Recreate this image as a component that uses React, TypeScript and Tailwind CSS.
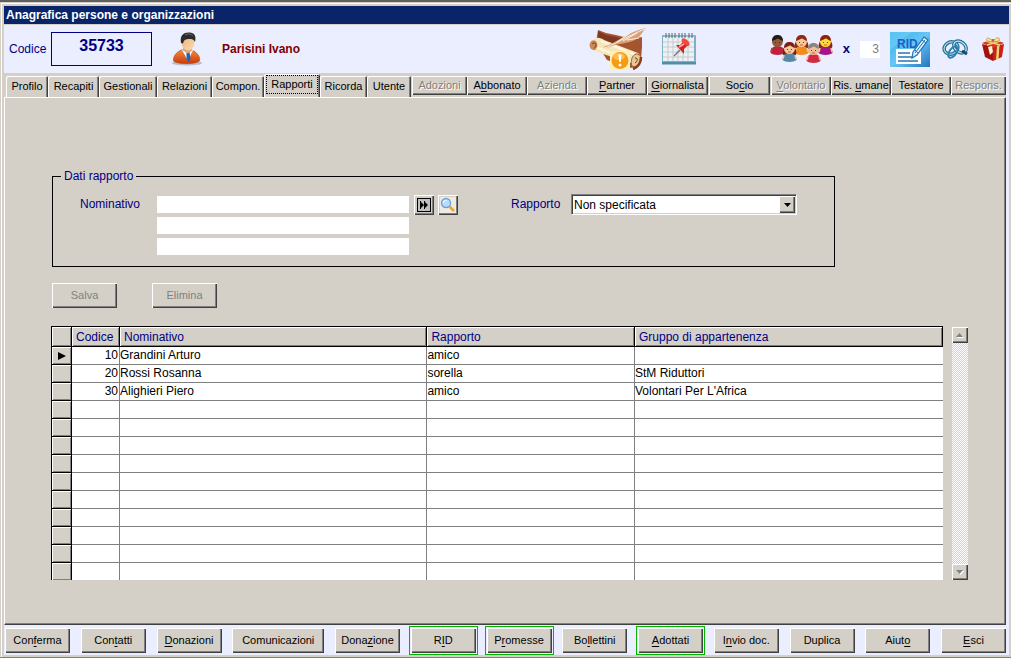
import React from "react";

const raised =
  "bg-[#d4d0c8] shadow-[inset_1px_1px_0_#fff,inset_-1px_-1px_0_#404040,inset_-2px_-2px_0_#808080]";
const disabledText = "text-[#808080] [text-shadow:1px_1px_0_#fff]";

/* Renders a caption with its access key underlined; the key follows a "&". */
function Caption({ text }: { text: string }) {
  const i = text.indexOf("&");
  if (i < 0) return <>{text}</>;
  return (
    <>
      {text.slice(0, i)}
      <u className="underline-offset-2">{text[i + 1]}</u>
      {text.slice(i + 2)}
    </>
  );
}

const tabs = [
  { label: "Profilo", size: "grow-[42]" },
  { label: "Recapiti", size: "grow-[51]" },
  { label: "Gestionali", size: "grow-[58]" },
  { label: "Relazioni", size: "grow-[55]" },
  { label: "Compon.", size: "grow-[52]" },
  { label: "Rapporti", size: "grow-[56]", selected: true },
  { label: "Ricorda", size: "grow-[47]" },
  { label: "Utente", size: "grow-[44]" },
];

const sections = [
  { label: "Adozioni", size: "grow-[55] ml-px", off: true },
  { label: "A&bbonato", size: "grow-[60]" },
  { label: "Azienda", size: "grow-[60]", off: true },
  { label: "&Partner", size: "grow-[60]" },
  { label: "&Giornalista", size: "grow-[61]" },
  { label: "So&cio", size: "grow-[61] mx-px" },
  { label: "&Volontario", size: "grow-[60]", off: true },
  { label: "Ris. &umane", size: "grow-[60]" },
  { label: "Testatore", size: "grow-[60]" },
  { label: "Respons.", size: "grow-[55]", off: true },
];

const actions = [
  { label: "Con&ferma" },
  { label: "Con&tatti" },
  { label: "&Donazioni" },
  { label: "Comunicazioni", wide: true },
  { label: "Dona&zione" },
  { label: "R&ID", marked: true },
  { label: "P&romesse", marked: true },
  { label: "Bo&llettini" },
  { label: "&Adottati", marked: true },
  { label: "I&nvio doc." },
  { label: "Duplica" },
  { label: "Aiut&o" },
  { label: "&Esci" },
];

const rows = [
  ["10", "Grandini Arturo", "amico", ""],
  ["20", "Rossi Rosanna", "sorella", "StM Riduttori"],
  ["30", "Alighieri Piero", "amico", "Volontari Per L'Africa"],
  ...Array.from({ length: 10 }, () => ["", "", "", ""]),
];

function PersonIcon() {
  return (
    <svg width="32" height="34" viewBox="0 0 32 34" aria-hidden="true">
      <defs>
        <linearGradient id="suit" x1="0" y1="0" x2="0" y2="1">
          <stop offset="0" stopColor="#f58a3c" />
          <stop offset="1" stopColor="#c83a08" />
        </linearGradient>
        <linearGradient id="face" x1="0" y1="0" x2="1" y2="1">
          <stop offset="0" stopColor="#e9b27c" />
          <stop offset="1" stopColor="#fbdcae" />
        </linearGradient>
      </defs>
      <ellipse cx="15" cy="31" rx="15" ry="2.500" fill="#9a9aa8" opacity=".6" />
      <path d="M1.500 29c-.5-5 3-9 8-11h10c5 2 9 6 8 11-4 3.500-22 3.500-26 0z" fill="url(#suit)" stroke="#b8410f" strokeWidth=".6" />
      <path d="M10 18l6 11 5-11z" fill="#f6f8ff" />
      <path d="M14.500 20h3l1 7-2 3-2-3z" fill="#1c63c0" />
      <path d="M11 14h9v4.500l-4 3-5-3z" fill="#dfa36c" />
      <ellipse cx="16" cy="11" rx="6.300" ry="7.500" fill="url(#face)" />
      <path d="M9 11C7.500 3 12 0 17.500 .5c5 .2 7 3.500 5.500 9.500C22 7.500 20 7 17 7c-3 .2-5 .4-6 4.500z" fill="#2b2b2b" />
      <path d="M13 3c3-2 6-1 8 1" stroke="#6d6d6d" fill="none" />
    </svg>
  );
}

function ScrollIcon() {
  return (
    <svg width="58" height="42" viewBox="0 0 58 42" aria-hidden="true">
      <path d="M9 2l8 3 10 2 16 4 10-2v10l-1 12-4 8-8 1-22-8L7 14z" fill="#a4542f" />
      <path d="M9 3l8 4 20 4-12 8-16-6z" fill="#7f3820" />
      <path d="M3 13c4-5 9-3 12-1l34 13c4 3 3 9-1 12L8 24c-5-1-8-6-5-11z" fill="#f6e6bd" />
      <path d="M12 13l35 14M9 20l36 14" stroke="#fff7dc" strokeWidth="2" fill="none" />
      <path d="M1 15c2-4 6-3 7 0s-1 8-4 7-4-4-3-7z" fill="#c98a5a" />
      <path d="M3 16c2-2 4-1 4 1s-1 3-2 3" stroke="#7c3418" fill="none" />
      <path d="M47 26c5 0 6 4 4 8s-5 6-8 4c-2-4 0-11 4-12z" fill="#e7c793" stroke="#a05a34" />
      <path d="M46 30c3 0 3 3 0 5" stroke="#7c3418" fill="none" />
      <path d="M44 41c5-2 8-6 8-12" stroke="#8a3a1e" strokeWidth="2.500" fill="none" />
      <path d="M14 19C28 15 38 4 57 0c-5 6-6 9-11 12-8 4-18 3-28 8z" fill="#d9a07b" />
      <path d="M16 20C32 13 41 7 56 1M28 14l12-8M34 13l14-8M38 12l12-2" stroke="#fff0e0" fill="none" />
      <rect x="21" y="23" width="20" height="19" fill="#fbf1b8" />
      <circle cx="31" cy="32.500" r="8.500" fill="#f79a14" />
      <ellipse cx="30" cy="28.500" rx="6" ry="3.500" fill="#fdbd53" />
      <path d="M29.500 26.500h3l-.7 7.500h-1.600z" fill="#fff" />
      <circle cx="31" cy="37" r="1.500" fill="#fff" />
    </svg>
  );
}

function CalendarIcon() {
  return (
    <svg width="36" height="34" viewBox="0 0 36 34" aria-hidden="true">
      <rect x="1" y="3" width="34" height="29" rx="1" fill="#7fb0c4" />
      <rect x="2" y="5" width="31" height="24" fill="#eef1f3" />
      <path d="M2 10h31M2 15h31M2 20h31M2 25h31M7 6v23M12 6v23M17 6v23M22 6v23M27 6v23" stroke="#c3cbd2" />
      <rect x="1" y="30" width="34" height="2.500" fill="#4f8da8" />
      <path d="M3 4h30" stroke="#9dbccb" strokeWidth="2" />
      <path d="M5 1v5M8 1v5M11 1v5M14 1v5M18 1v5M21 1v5M24 1v5M28 1v5M31 1v5" stroke="#4e6979" />
      <path d="M13 24l6-6" stroke="#777" strokeWidth="1.500" />
      <path d="M15 13l4 0 3-3 0-3 7 6-3 1-3 3 0 5z" fill="#dc1d1d" />
      <ellipse cx="24.500" cy="10" rx="4.500" ry="2.500" transform="rotate(40 24.500 10)" fill="#f04a40" />
      <path d="M18 15l5-3" stroke="#ffb0a5" strokeWidth="1.500" />
    </svg>
  );
}

function Kid({ x, y, skin, hair, shirt, tails }: { x: number; y: number; skin: string; hair: string; shirt: string; tails?: boolean }) {
  return (
    <g transform={`translate(${x} ${y})`}>
      {tails && <path d="M0 13c-1-3 0-6 2-8h9c2 2 3 5 2 8z" fill={hair} />}
      <path d="M-.5 18c0-4.500 2.500-7 7-7s7 2.500 7 7c-3 2.500-11 2.500-14 0z" fill={shirt} />
      <path d="M1 13l-1 4M12 13l1 4" stroke={skin} strokeWidth="1.500" />
      <circle cx="6.500" cy="6.500" r="5.500" fill={skin} />
      <path d="M1 6C1 1 4 0 6.500 0S12 1 12 6C9 5 8 3.500 7 3.500S4 5 1 6z" fill={hair} />
      <path d="M4.500 7v1M8.500 7v1" stroke="#3a2416" strokeWidth=".8" />
      <path d="M5 10h3" stroke="#c8402c" strokeWidth=".8" />
    </g>
  );
}

function FamilyIcon() {
  return (
    <svg width="63" height="28" viewBox="0 0 63 28" aria-hidden="true">
      <Kid x={1} y={0} skin="#8d5a3c" hair="#221a18" shirt="#c2213d" />
      <Kid x={25} y={0} skin="#f7c896" hair="#8c2a17" shirt="#f28a1c" tails />
      <Kid x={49} y={0} skin="#f8dd32" hair="#8c2318" shirt="#a8128c" tails />
      <Kid x={13} y={7} skin="#f6c99c" hair="#7d1e17" shirt="#5489a3" tails />
      <Kid x={37} y={8} skin="#f0bd94" hair="#8a8580" shirt="#d22a3e" />
    </svg>
  );
}

function RidIcon() {
  return (
    <svg width="40" height="35" viewBox="0 0 40 35" aria-hidden="true">
      <defs>
        <linearGradient id="ridbg" x1="0" y1="0" x2="1" y2="1">
          <stop offset="0" stopColor="#2fb2ef" />
          <stop offset=".5" stopColor="#69c5f3" />
          <stop offset="1" stopColor="#2673be" />
        </linearGradient>
      </defs>
      <rect width="40" height="35" fill="url(#ridbg)" />
      <path d="M0 0h22L0 18z" fill="#7fd4f8" opacity=".5" />
      <path d="M6 17h25v15H6z" fill="#fff" />
      <path d="M8 21h12M8 25h14M8 29h20" stroke="#2675b8" strokeWidth="1.600" />
      <text x="7" y="16" fontFamily="Liberation Sans" fontWeight="700" fontSize="12" fill="#1a5fc4">RID</text>
      <path d="M34 5l4 3-11 15-5 3 1-6z" fill="#d8f0fc" stroke="#2371b8" strokeWidth="1.200" />
      <path d="M32 8l4 3M25 18l3 3M35 8L25 21" stroke="#2371b8" />
    </svg>
  );
}

function RingsIcon() {
  return (
    <svg width="27" height="24" viewBox="0 0 27 24" aria-hidden="true">
      <g fill="none">
        <ellipse cx="9" cy="11" rx="7" ry="6" stroke="#2b6f92" strokeWidth="3.500" transform="rotate(-25 9 11)" />
        <ellipse cx="9" cy="11" rx="7" ry="6" stroke="#a9d3e6" strokeWidth="1.200" transform="rotate(-25 9 11)" />
        <ellipse cx="18" cy="10" rx="5" ry="7" stroke="#256f9a" strokeWidth="3.500" transform="rotate(-50 18 10)" />
        <ellipse cx="18" cy="10" rx="5" ry="7" stroke="#c4e5f3" strokeWidth="1.200" transform="rotate(-50 18 10)" />
        <ellipse cx="11" cy="15" rx="3.500" ry="6.500" stroke="#2b82b4" strokeWidth="2" transform="rotate(35 11 15)" />
        <path d="M20 14l5 3" stroke="#174a6b" strokeWidth="3" />
      </g>
    </svg>
  );
}

function GiftIcon() {
  return (
    <svg width="24" height="25" viewBox="0 0 24 25" aria-hidden="true">
      <path d="M1 7l11 3v14L4 20z" fill="#a3120e" />
      <path d="M12 10l11-3-2 13-9 4z" fill="#c9211a" />
      <path d="M1 6l11-4 11 4-11 5z" fill="#d8352a" />
      <path d="M16 9l2.500-1-1 14-2.500 1z" fill="#f1d274" />
      <path d="M5 4l14 4M19 4L6 8" stroke="#f1d274" strokeWidth="1.600" />
      <path d="M12 5C8-1 4 1 6 4zM12 5c3-6 8-5 6-1z" fill="#f7e3a0" stroke="#b98b2b" strokeWidth=".7" />
      <path d="M7 10l4-1 1 6-3 3z" fill="#fff3d2" />
    </svg>
  );
}

function Header() {
  return (
    <header className="flex h-12 items-center bg-[#ebeeff] pl-[5px] pr-1 text-[#000080]">
      <label htmlFor="codice" className="w-[42px]">Codice</label>
      <input
        id="codice"
        readOnly
        value="35733"
        className="h-[34px] w-[101px] border border-[#000080] bg-transparent pb-1.5 text-center text-base font-bold"
      />
      <span className="ml-5">
        <PersonIcon />
      </span>
      <strong className="ml-[18px] text-[#800000]">Parisini Ivano</strong>
      <div className="ml-auto flex items-center gap-3.5">
        <button aria-label="Documenti"><ScrollIcon /></button>
        <button aria-label="Calendario"><CalendarIcon /></button>
      </div>
      <div className="ml-[73px] flex items-center">
        <FamilyIcon />
        <label htmlFor="membri" className="ml-2.5 text-[13px] font-bold">x</label>
        <input
          id="membri"
          readOnly
          value="3"
          className="ml-2.5 h-[17px] w-5 bg-white pr-px text-right text-[#808080]"
        />
        <button aria-label="RID" className="ml-2.5"><RidIcon /></button>
        <button aria-label="Collegamenti" className="ml-3"><RingsIcon /></button>
        <button aria-label="Regalo" className="ml-3"><GiftIcon /></button>
      </div>
    </header>
  );
}

function TabStrip() {
  return (
    <nav className="mr-[3px] flex h-6 items-end pl-0.5 text-[11px] text-black">
      {tabs.map((t) => (
        <button
          key={t.label}
          aria-pressed={!!t.selected}
          className={`${t.size} min-w-0 basis-0 whitespace-nowrap rounded-t-[2px] bg-[#d4d0c8] shadow-[inset_1px_1px_0_#fff,inset_-1px_0_0_#404040,inset_-2px_0_0_#808080] ${
            t.selected ? "h-[23px]" : "h-[21px]"
          }`}
        >
          {t.selected ? (
            <span className="mx-0.5 mb-0.5 block border border-dotted border-black leading-[17px]">{t.label}</span>
          ) : (
            t.label
          )}
        </button>
      ))}
      {sections.map((s) => (
        <button
          key={s.label}
          disabled={s.off}
          className={`${s.size} mb-0.5 h-[19px] min-w-0 basis-0 whitespace-nowrap ${raised} ${s.off ? disabledText : ""}`}
        >
          <Caption text={s.label} />
        </button>
      ))}
    </nav>
  );
}

function ReportFields() {
  const field = "h-[17px] w-[252px] bg-white px-0.5";
  return (
    <fieldset className="mr-[170px] flex border border-black pb-[11px] pl-7 pr-[37px] pt-[13px] text-[#000080]">
      <legend className="-ml-5 px-[3px] leading-[14px]">Dati rapporto</legend>
      <label htmlFor="nominativo" className="-ml-px w-[77px] leading-[17px]">Nominativo</label>
      <div className="flex flex-col gap-1">
        <input id="nominativo" className={field} />
        <input aria-label="Nominativo, riga 2" className={field} />
        <input aria-label="Nominativo, riga 3" className={field} />
      </div>
      <button aria-label="Avanti" className={`-mt-px ml-[5px] flex size-5 items-center justify-center ${raised}`}>
        <svg width="14" height="14" viewBox="0 0 14 14" aria-hidden="true">
          <rect x=".5" y=".5" width="13" height="13" fill="#c0c0c0" stroke="#000" />
          <path d="M3 3l4 4-4 4zM7 3l4 4-4 4zM3 3h1v8h-1zM7 3h1v8h-1z" fill="#000" />
        </svg>
      </button>
      <button aria-label="Cerca" className={`-mt-px ml-1 flex size-5 items-center justify-center ${raised}`}>
        <svg width="16" height="16" viewBox="0 0 16 16" aria-hidden="true">
          <rect width="16" height="16" fill="#efebe0" />
          <path d="M9 9l5 5" stroke="#e9a93a" strokeWidth="2.600" />
          <circle cx="6" cy="6" r="4.500" fill="#b5dcfa" stroke="#6f9fe0" strokeWidth="1.300" />
          <path d="M3.500 6c0-2 1-2.500 3-2.500" stroke="#fff" fill="none" />
        </svg>
      </button>
      <label htmlFor="rapporto" className="ml-[53px] w-[60px] leading-[17px]">Rapporto</label>
      <div className="relative -mt-0.5 h-[21px] flex-1">
        <select
          id="rapporto"
          className="h-full w-full appearance-none border border-b-white border-l-[#808080] border-r-white border-t-[#808080] bg-white pl-0.5 text-black shadow-[inset_1px_1px_0_#404040,inset_-1px_-1px_0_#d4d0c8]"
        >
          <option>Non specificata</option>
        </select>
        <span className={`pointer-events-none absolute bottom-0.5 right-0.5 top-0.5 flex w-4 items-center justify-center ${raised}`}>
          <svg width="7" height="4" viewBox="0 0 7 4" aria-hidden="true"><path d="M0 0h7L3.500 4z" /></svg>
        </span>
      </div>
    </fieldset>
  );
}

function RelationTable() {
  const head =
    "border-b border-r border-black bg-[#d4d0c8] py-0 pl-1 pr-0 text-left font-normal shadow-[inset_1px_1px_0_#fff,inset_-1px_-1px_0_#808080]";
  return (
    <div className="mr-[37px] mt-[18px] flex items-stretch gap-[9px]">
      <table className="-ml-px flex-1 table-fixed border-separate border-spacing-0 border-l border-t border-black bg-white leading-[16px] text-black">
        <colgroup>
          <col className="w-5" />
          <col className="w-12" />
          <col className="w-[34.5%]" />
          <col className="w-[23.3%]" />
          <col />
        </colgroup>
        <thead>
          <tr className="h-5 text-[#000080]">
            <th className={head} aria-label="Selezione" />
            <th className={head}>Codice</th>
            <th className={head}>Nominativo</th>
            <th className={head}>Rapporto</th>
            <th className={head}>Gruppo di appartenenza</th>
          </tr>
        </thead>
        <tbody>
          {rows.map((r, i) => {
            const last = i === rows.length - 1;
            const line = last ? "" : "border-b";
            const cell = `${line} border-[#808080] p-0 whitespace-nowrap align-top`;
            return (
              <tr key={i} className={last ? "h-[17px]" : "h-[18px]"}>
                <td className={`${line} border-r border-black bg-[#d4d0c8] p-0 shadow-[inset_1px_1px_0_#fff,inset_-1px_-1px_0_#808080]`}>
                  {i === 0 && (
                    <svg className="ml-1.5" width="8" height="8" viewBox="0 0 8 8" aria-hidden="true">
                      <path d="M0 0l8 4-8 4z" />
                    </svg>
                  )}
                </td>
                <td className={`${cell} border-r pr-px text-right`}>{r[0]}</td>
                <td className={`${cell} border-r`}>{r[1]}</td>
                <td className={`${cell} border-r`}>{r[2]}</td>
                <td className={cell}>{r[3]}</td>
              </tr>
            );
          })}
        </tbody>
      </table>
      <div className="mt-px flex w-4 flex-col justify-between bg-[repeating-conic-gradient(#fff_0_25%,#d4d0c8_0_50%)] bg-[length:2px_2px]">
        <button disabled aria-label="Scorri su" className={`flex h-4 items-center justify-center ${raised}`}>
          <svg width="8" height="5" viewBox="0 0 8 5" aria-hidden="true">
            <path d="M1 5h7L4.500 1z" fill="#fff" />
            <path d="M0 4h7L3.500 0z" fill="#808080" />
          </svg>
        </button>
        <button disabled aria-label="Scorri giù" className={`flex h-4 items-center justify-center ${raised}`}>
          <svg width="8" height="5" viewBox="0 0 8 5" aria-hidden="true">
            <path d="M1 1h7L4.500 5z" fill="#fff" />
            <path d="M0 0h7L3.500 4z" fill="#808080" />
          </svg>
        </button>
      </div>
    </div>
  );
}

export default function App() {
  return (
    <div className="flex min-h-screen flex-col border-b border-t-2 border-b-[#808080] border-t-[#606060] bg-[#d4d0c8] font-['Liberation_Sans',Arial,sans-serif] text-xs">
      <div className="ml-px mt-px flex flex-1 flex-col border-l border-t border-white pb-0.5 pl-0.5 pr-0.5 pt-0.5">
        <h1 className="mb-px h-[18px] bg-[#0a246a] pl-0.5 text-xs font-bold leading-[18px] text-white">
          Anagrafica persone e organizzazioni
        </h1>
        <Header />
        <div className="flex flex-1 flex-col bg-[#ebeeff]">
          <div className="mr-[3px] flex flex-1 flex-col bg-[#d4d0c8]">
            <div className="-mr-[3px]">
              <TabStrip />
            </div>
            <main className="flex-1 border-b border-l border-r border-t border-b-[#404040] border-l-white border-r-[#404040] border-t-white pl-[47px] pt-[71px] shadow-[inset_-1px_-1px_0_#808080]">
              <ReportFields />
              <div className={`mt-4 flex gap-[35px] text-[11px] ${disabledText}`}>
                <button disabled className={`h-[25px] w-[65px] ${raised}`}>Salva</button>
                <button disabled className={`h-[25px] w-[65px] ${raised}`}>Elimina</button>
              </div>
              <RelationTable />
            </main>
          </div>
          <footer className="flex h-[30px] items-center justify-between pl-px pr-[3px] text-[11px]">
            {actions.map((a) => (
              <span key={a.label} className={`-m-0.5 border p-px ${a.marked ? "border-[#00b400]" : "border-transparent"}`}>
                <button className={`block h-[25px] whitespace-nowrap ${a.wide ? "w-[92px]" : "w-[65px]"} ${raised}`}>
                  <Caption text={a.label} />
                </button>
              </span>
            ))}
          </footer>
        </div>
      </div>
    </div>
  );
}
